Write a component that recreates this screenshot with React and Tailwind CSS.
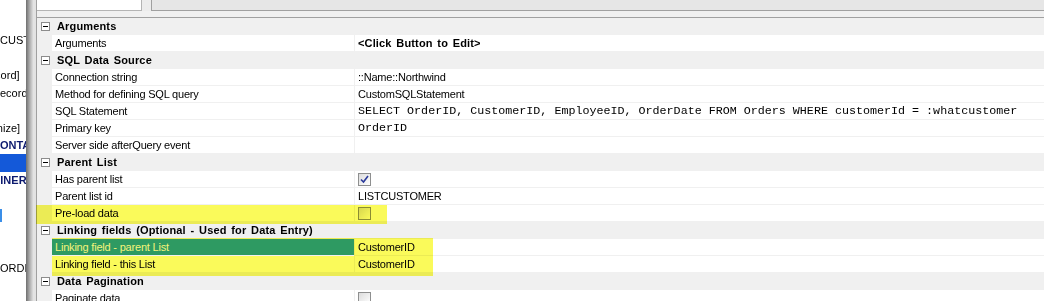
import React from "react";

const F = { fontFamily: '"Liberation Sans", Arial, sans-serif' };

function Minus() {
  return (
    <div className="w-[9px] h-[9px] border border-[#8c8c8c] bg-white flex items-center justify-center">
      <div className="w-[5px] h-px bg-black" />
    </div>
  );
}

function Cat({ label }) {
  return (
    <div className="h-[17px] flex items-center bg-[#f0f0f0]">
      <div className="w-[15px] flex justify-center pl-[1px]">
        <Minus />
      </div>
      <div className="pl-[5px] font-bold text-[11px] text-black tracking-[0.15px] [word-spacing:1.5px]">{label}</div>
    </div>
  );
}

function Check({ checked }) {
  return (
    <div className="w-[13px] h-[13px] border border-[#8e8f8f] bg-gradient-to-br from-[#dcdcdc] to-white flex items-center justify-center">
      {checked && (
        <svg width="9" height="9" viewBox="0 0 9 9">
          <path d="M1 4.5 L3.5 7 L8 1" stroke="#2a3a9a" strokeWidth="1.6" fill="none" />
        </svg>
      )}
    </div>
  );
}

function Row({ name, value, selected }) {
  return (
    <div className="h-[17px] flex bg-white">
      <div className="w-[15px] bg-[#f0f0f0] shrink-0" />
      <div
        className={
          "w-[302px] shrink-0 flex items-center pl-[3px] text-[11px] tracking-[-0.2px] border-b border-[#f0f0f0] " +
          (selected ? "relative z-20 bg-[#2e9a62] text-[#f4f47a] border-[#2e9a62]" : "text-black")
        }
      >
        {name}
      </div>
      <div className="w-px bg-[#f0f0f0] shrink-0" />
      <div className="flex-1 flex items-center pl-[3px] border-b border-[#f0f0f0] min-w-0 whitespace-nowrap overflow-hidden">
        {value}
      </div>
    </div>
  );
}

const V = ({ children, cls = "" }) => (
  <span className={"text-[11px] tracking-[-0.2px] text-black " + cls}>{children}</span>
);
const M = ({ children }) => (
  <span
    className="text-[11.7px] text-black pt-[2px]"
    style={{ fontFamily: '"Liberation Mono", "Courier New", monospace' }}
  >
    {children}
  </span>
);

function LeftLine({ children, cls = "" }) {
  return (
    <div className="h-[17.5px] flex items-center whitespace-nowrap text-[11px] text-black">
      <span className={"shrink-0 " + cls}>{children}</span>
    </div>
  );
}

export default function App() {
  return (
    <div className="w-[1044px] h-[301px] overflow-hidden flex bg-white" style={F}>
      {/* left tree panel (clipped) */}
      <div className="w-[26px] shrink-0 overflow-hidden bg-white">
        <div className="-mt-[3.5px]">
          <LeftLine />
          <LeftLine />
          <LeftLine>CUSTOMER</LeftLine>
          <LeftLine />
          <LeftLine cls="-ml-[22px]">[Record]</LeftLine>
          <LeftLine cls="-ml-[11px]">[Record]</LeftLine>
          <LeftLine />
          <LeftLine cls="-ml-[38px]">[Customize]</LeftLine>
          <LeftLine cls="-ml-[8px] font-bold text-[#0d1a6e]">CONTAINER</LeftLine>
          <div className="h-[17.5px] bg-[#1459d9]" />
          <LeftLine cls="-ml-[38px] font-bold text-[#0d1a6e]">CONTAINER</LeftLine>
          <LeftLine />
          <div className="h-[17.5px] flex items-center">
            <div className="w-[2px] h-[13px] bg-[#3a8ee8]" />
          </div>
          <LeftLine />
          <LeftLine />
          <LeftLine>ORDERS</LeftLine>
          <LeftLine />
          <div className="h-[17.5px] flex items-end pl-[15px]">
            <div className="w-[6px] h-[3px] bg-[#333]" />
          </div>
        </div>
      </div>
      {/* window shadow */}
      <div className="w-[7px] shrink-0 bg-gradient-to-r from-[#6f6f6f] via-[#a9a9a9] to-[#dedede]" />
      <div className="w-[3px] shrink-0 bg-[#e3e3e3]" />
      <div className="w-px shrink-0 bg-[#a0a0a0]" />

      {/* main */}
      <div className="flex-1 flex flex-col min-w-0 relative">
        {/* top tabs */}
        <div className="h-[18px] shrink-0 bg-[#ececec] flex flex-col border-b border-[#a0a0a0]">
          <div className="h-[11px] flex">
            <div className="w-[105px] h-[11px] bg-white border-r border-b border-[#b4b4b4]" />
            <div className="w-[9px]" />
            <div className="flex-1 bg-[#e6e6e6] border-l border-b border-[#a0a0a0]" />
          </div>
          <div className="flex-1 bg-[#f0f0f0]" />
        </div>

        {/* property grid */}
        <div className="flex flex-col">
          <Cat label="Arguments" />
          <Row
            name="Arguments"
            value={
              <span className="font-bold text-[11px] text-black tracking-[0.15px] [word-spacing:1.5px]">
                &lt;Click Button to Edit&gt;
              </span>
            }
          />
          <Cat label="SQL Data Source" />
          <Row name="Connection string" value={<V cls="text-[#222]">::Name::Northwind</V>} />
          <Row name="Method for defining SQL query" value={<V>CustomSQLStatement</V>} />
          <Row
            name="SQL Statement"
            value={<M>SELECT OrderID, CustomerID, EmployeeID, OrderDate FROM Orders WHERE customerId = :whatcustomer</M>}
          />
          <Row name="Primary key" value={<M>OrderID</M>} />
          <Row name="Server side afterQuery event" value={null} />
          <Cat label="Parent List" />
          <Row name="Has parent list" value={<Check checked />} />
          <Row name="Parent list id" value={<V cls="text-[#16166a]">LISTCUSTOMER</V>} />
          <Row name="Pre-load data" value={<Check />} />
          <Cat label="Linking fields (Optional - Used for Data Entry)" />
          <Row name="Linking field - parent List" value={<V>CustomerID</V>} selected />
          <Row name="Linking field - this List" value={<V>CustomerID</V>} />
          <Cat label="Data Pagination" />
          <Row name="Paginate data" value={<Check />} />
        </div>

        {/* highlighter marks */}
        <div className="absolute left-[-1px] top-[205px] w-[351px] h-[19px] bg-[#fafa5a] mix-blend-multiply z-10 pointer-events-none" />
        <div className="absolute left-[15px] top-[238px] w-[381px] h-[38px] bg-[#fafa5a] mix-blend-multiply z-10 pointer-events-none" />
      </div>
    </div>
  );
}
